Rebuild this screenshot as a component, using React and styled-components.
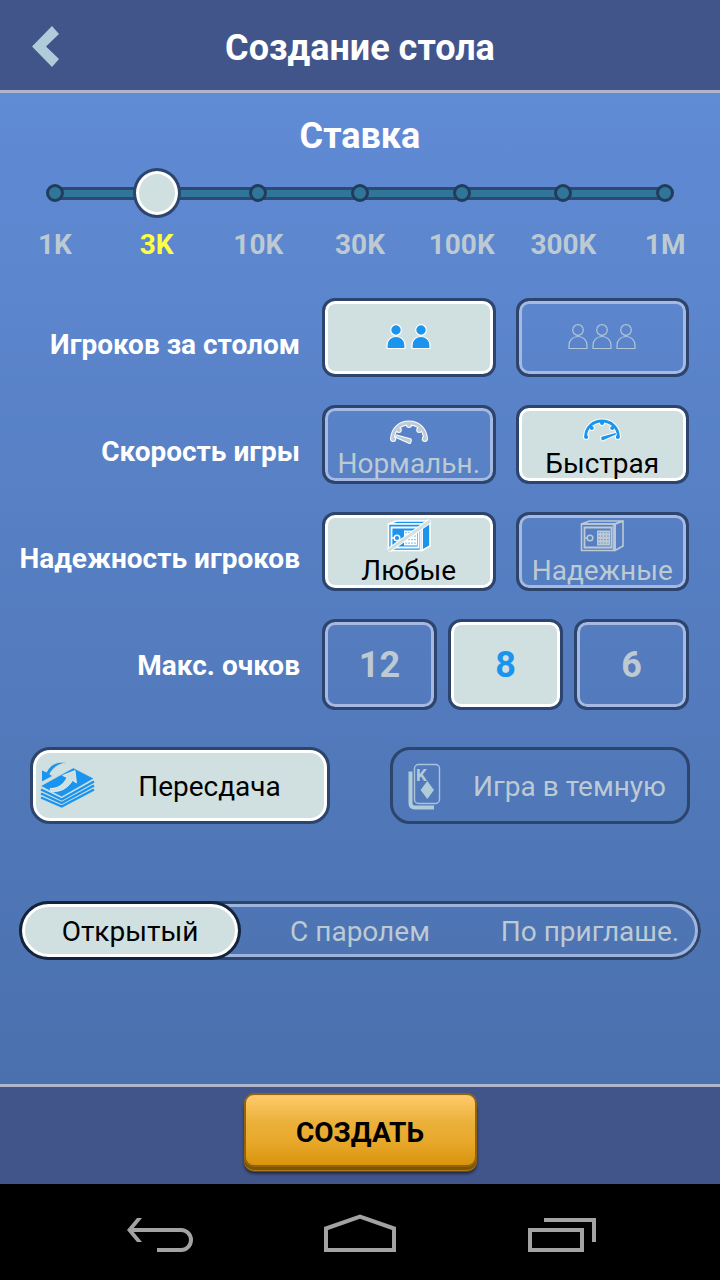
import React, { useState } from 'react'
import styled, { createGlobalStyle, css } from 'styled-components'

const COLORS = {
  bar: '#41558b',
  barLine: '#b0b6c9',
  outline: '#2d446c',
  light: '#d0e0e0',
  muted: '#bdcad3',
  blue: '#1b94ee',
}

const GlobalStyle = createGlobalStyle`
  * {
    box-sizing: border-box;
  }

  body {
    margin: 0;
    background: #000;
    font-family: Roboto, 'Noto Sans', sans-serif;
  }

  svg {
    display: block;
  }
`

const Page = styled.div`
  display: flex;
  flex-direction: column;
  min-height: 100vh;
`

const Header = styled.header`
  display: grid;
  grid-template-columns: 90px 1fr 90px;
  align-items: center;
  height: 93px;
  background: ${COLORS.bar};
  border-bottom: 3px solid ${COLORS.barLine};
`

const Title = styled.h1`
  margin: 0;
  padding-top: 6px;
  font-size: 36px;
  line-height: 42px;
  font-weight: 700;
  text-align: center;
  color: #fff;
`

const PlainButton = styled.button`
  padding: 0;
  border: 0;
  background: none;
  cursor: pointer;
`

const Main = styled.main`
  flex: 1;
  padding: 16px 0 40px;
  background: linear-gradient(to bottom, #608bd5, #4a70ad);
`

const StakeTitle = styled(Title).attrs({ as: 'h2' })``

const Slider = styled.div`
  position: relative;
  display: flex;
  align-items: center;
  height: 50px;
  margin: 11px 55px;
`

const Rail = styled.div`
  flex: 1;
  height: 13px;
  border: solid #2f486f;
  border-width: 3px 0;
  background: #30769a;
`

const Stops = styled.div`
  position: absolute;
  inset: 0 -9px;
  display: flex;
  align-items: center;
  justify-content: space-between;
`

const Stop = styled.span`
  width: 18px;
  height: 18px;
  border: 3px solid #223c5c;
  border-radius: 50%;
  background: #30769a;
`

const thumb = css`
  box-sizing: border-box;
  width: 48px;
  height: 50px;
  border: 3px solid ${COLORS.outline};
  border-radius: 50%;
  background: ${COLORS.light};
  box-shadow: inset 0 0 0 3px #fff;
`

const Range = styled.input`
  position: absolute;
  top: 0;
  left: -24px;
  width: calc(100% + 48px);
  height: 50px;
  margin: 0;
  appearance: none;
  background: none;
  cursor: pointer;

  &::-webkit-slider-thumb {
    appearance: none;
    ${thumb}
  }

  &::-moz-range-thumb {
    ${thumb}
  }
`

const StakeLabels = styled.div`
  display: grid;
  grid-template-columns: repeat(7, 1fr);
  padding: 0 4px;
`

const StakeLabel = styled.span`
  font-size: 28px;
  line-height: 32px;
  font-weight: 700;
  text-align: center;
  color: ${({ active }) => (active ? '#ffff45' : COLORS.muted)};
`

const Options = styled.div`
  display: flex;
  flex-direction: column;
  gap: 28px;
  margin-top: 37px;
`

const OptionRow = styled.div`
  display: grid;
  grid-template-columns: 300px 1fr;
  column-gap: 22px;
  align-items: center;
  padding-right: 31px;
`

const OptionLabel = styled.span`
  padding-top: ${({ lowered }) => (lowered ? 15 : 2)}px;
  font-size: 28px;
  line-height: 32px;
  font-weight: 700;
  text-align: right;
  white-space: nowrap;
  color: #fff;
`

const Choices = styled.div`
  display: grid;
  grid-template-columns: repeat(${({ count }) => count}, 1fr);
  gap: ${({ count }) => (count > 2 ? 11 : 20)}px;
`

const HiddenInput = styled.input`
  position: absolute;
  inset: 0;
  width: 100%;
  height: 100%;
  margin: 0;
  opacity: 0;
  cursor: pointer;
`

const ChoiceBox = styled.label`
  position: relative;
  display: flex;
  flex-direction: column;
  align-items: center;
  justify-content: center;
  height: ${({ tall }) => (tall ? 91 : 79)}px;
  border: 3px solid ${COLORS.outline};
  border-radius: 13px;
  background: ${({ active }) => (active ? COLORS.light : 'transparent')};
  box-shadow: inset 0 0 0 3px ${({ active }) => (active ? '#fff' : '#a5b9e2')};
`

const ChoiceText = styled.span`
  padding-top: 2px;
  font-size: 28px;
  line-height: 32px;
  white-space: nowrap;
  color: ${({ active }) => (active ? '#000' : COLORS.muted)};
`

const ChoiceNumber = styled.span`
  font-size: 36px;
  line-height: 42px;
  font-weight: 700;
  color: ${({ active }) => (active ? COLORS.blue : COLORS.muted)};
`

const People = styled.span`
  display: flex;
  gap: ${({ count }) => (count > 2 ? 4 : 5)}px;
`

const Toggles = styled.div`
  display: grid;
  grid-template-columns: 1fr 1fr;
  gap: 60px;
  margin-top: 37px;
  padding: 0 30px;
`

const ToggleBox = styled.label`
  position: relative;
  display: flex;
  align-items: center;
  height: 77px;
  padding-right: 3px;
  border: 3px solid ${COLORS.outline};
  border-radius: 20px;
  background: ${({ active }) => (active ? COLORS.light : 'transparent')};
  box-shadow: ${({ active }) => (active ? 'inset 0 0 0 3px #fff' : 'none')};
`

const ToggleText = styled(ChoiceText)`
  flex: 1;
  text-align: center;
`

const Segments = styled.div`
  display: grid;
  grid-template-columns: repeat(3, 1fr);
  gap: 8px;
  margin: 77px 19px 0;
  border-radius: 30px;
  box-shadow:
    inset 0 0 0 3px ${COLORS.outline},
    inset 0 0 0 6px #a0b5dd;
`

const Segment = styled.label`
  position: relative;
  display: flex;
  align-items: center;
  justify-content: center;
  height: 59px;
  border: 3px solid ${({ active }) => (active ? '#14233c' : 'transparent')};
  border-radius: 30px;
  ${({ active }) =>
    active &&
    css`
      background: ${COLORS.light};
      box-shadow: inset 0 0 0 3px #fff;
    `}
`

const Footer = styled.footer`
  display: flex;
  justify-content: center;
  height: 100px;
  padding-top: 6px;
  border-top: 3px solid ${COLORS.barLine};
  background: ${COLORS.bar};
`

const CreateButton = styled.button`
  width: 233px;
  height: 74px;
  padding: 6px 0 0;
  border: 2px solid #94640d;
  border-radius: 10px;
  background: linear-gradient(
    to bottom,
    #ffca6a,
    #ebb03a 40%,
    #e8a92c 65%,
    #d9940c
  );
  box-shadow:
    inset 0 1px 0 #e3c48c,
    0 3px 0 #7d5304,
    0 4px 0 #b07a16,
    0 5px 0 #6e4a08,
    0 7px 3px rgba(0, 0, 0, 0.5);
  font-family: inherit;
  font-size: 28px;
  line-height: 32px;
  font-weight: 700;
  color: #000;
  cursor: pointer;
`

const NavBar = styled.nav`
  display: flex;
  justify-content: center;
  gap: 100px;
  height: 96px;
  background: #000;
`

const BackIcon = () => (
  <svg width="90" height="90" viewBox="0 0 90 90">
    <path d="M32 46.5L52 26l7 8-13 12.5L59 59l-7 8z" fill="#b0ccda" />
  </svg>
)

const PersonIcon = ({ active }) => (
  <svg
    width="20"
    height="27"
    viewBox="0 0 20 27"
    fill={active ? COLORS.blue : 'none'}
    stroke={active ? '#fff' : '#b4c5d6'}
    strokeWidth="1.2"
  >
    <circle cx="10" cy="6" r="5.3" />
    <path d="M1 24.5V21.5C1 16 5 12.5 10 12.5S19 16 19 21.5V24.5Z" />
  </svg>
)

const GAUGE_ARC = 'M5.6 27.5C6 18 13 12 22 12S38 18 38.4 27.5'
const GAUGE_TICKS = [
  [6.2, 28],
  [11.8, 19],
  [22, 14],
  [32.2, 19],
  [37.8, 28],
]

const GaugeShape = ({ needle, grow }) => (
  <>
    <path d={GAUGE_ARC} fill="none" strokeWidth={2.8 + grow} />
    {GAUGE_TICKS.map(([x, y]) => (
      <circle key={x} cx={x} cy={y} r={2 + grow / 2} stroke="none" />
    ))}
    <path d={needle} strokeWidth={1.8 + grow} />
  </>
)

const GaugeIcon = ({ active, fast }) => {
  const needle = fast
    ? 'M22 28.5L35 25L22.500 30.500Z'
    : 'M23 29L10 25.500L22.500 31Z'
  const fill = active ? COLORS.blue : '#bccbd4'
  return (
    <svg
      width="44"
      height="36"
      viewBox={fast ? '0 1 44 36' : '0 -1 44 36'}
      strokeLinecap="round"
      strokeLinejoin="round"
    >
      <g fill="#fff" stroke="#fff">
        <GaugeShape needle={needle} grow={2} />
      </g>
      <g fill={fill} stroke={fill}>
        <GaugeShape needle={needle} grow={0} />
      </g>
    </svg>
  )
}

const KEYPAD = [14, 17.5, 21, 24.5]

const SafeIcon = ({ active, slashed }) => {
  const line = active ? '#fff' : COLORS.muted
  const fill = active ? COLORS.blue : 'none'
  return (
    <svg width="44" height="36" viewBox="0 -1 44 36">
      <g fill={fill} stroke={line} strokeWidth="1.6" strokeLinejoin="round">
        <path d="M1.5 6L9.5 3H43L35 6Z" />
        <path d="M35 6L43 3V28L35 32.500Z" />
        <path d="M1.5 6H35V32.500H1.500Z" />
      </g>
      <g fill="none" stroke={line}>
        <path d="M4.5 9.500H31.500V29.500H4.500Z" strokeWidth="1.8" />
        <path d="M33.3 7V32" strokeWidth="1.2" />
        <circle cx="10" cy="20" r="2.8" strokeWidth="1.5" />
        <path d="M5 20H7" strokeWidth="1.5" />
      </g>
      <path d="M17 12.500H30V27.500H17Z" fill={line} />
      <g fill={active ? COLORS.blue : '#5a80c4'}>
        {KEYPAD.map(y =>
          [18.5, 21.5, 24.5, 27.5].map(x => (
            <rect key={`${x}-${y}`} x={x} y={y} width="1" height="1.2" />
          ))
        )}
      </g>
      {slashed && (
        <>
          <path d="M1.5 32.500L43 3" stroke="#fff" strokeWidth="4.8" />
          <path d="M1.5 32.500L43 3" stroke={COLORS.light} strokeWidth="2.8" />
        </>
      )}
    </svg>
  )
}

const RedealIcon = () => (
  <svg width="62" height="60" viewBox="0 0 62 60">
    <g fill="none" stroke={COLORS.blue} strokeWidth="2.4">
      <path d="M8 33.500L28.700 43.500L61 25.500" />
      <path d="M8 37.500L28.700 47L61 29.500" />
      <path d="M8 41.500L28.700 50.500L61 33.500" />
    </g>
    <path
      d="M7.5 30L40.300 11.800L61 22.500L28.700 41Z"
      fill={COLORS.blue}
      stroke={COLORS.light}
      strokeWidth="0.8"
    />
    <path
      d="M35 6.800C25 4.500 17.500 8 13.500 16L8.500 13.700V26.200L20 20L16.800 18.200C20 11.500 26 7.500 35 6.800Z"
      fill={COLORS.blue}
      stroke={COLORS.light}
      strokeWidth="1"
    />
    <path
      d="M17 32.500C25 32.500 30 29 34 21.500L29.500 19.500L42 14.500L43.500 27L39.500 24.500C35 32 28 36.500 18 35.500Z"
      fill={COLORS.light}
      stroke="#fff"
      strokeWidth="0.6"
    />
  </svg>
)

const BlindIcon = () => (
  <svg width="62" height="60" viewBox="0 0 62 60">
    <path
      d="M17.500 15.500V47Q17.500 51.500 22 51.500H41"
      fill="none"
      stroke="#b0ccd9"
      strokeWidth="4"
    />
    <rect
      x="21.5"
      y="8.500"
      width="25"
      height="39"
      rx="4"
      fill="#5279b9"
      stroke="#a9c3dc"
      strokeWidth="1.4"
    />
    <text
      x="23"
      y="25"
      fontSize="17"
      fontWeight="700"
      fontFamily="Roboto, sans-serif"
      fill="#b0ccd9"
    >
      K
    </text>
    <path d="M34.300 25L41 34L34.300 43L27.600 34Z" fill="#b0ccd9" />
  </svg>
)

const NavIcon = ({ children }) => (
  <svg
    width="100"
    height="96"
    viewBox="0 0 100 96"
    fill="none"
    stroke="#a3a3a3"
    strokeWidth="4"
  >
    {children}
  </svg>
)

const STAKES = ['1K', '3K', '10K', '30K', '100K', '300K', '1M']

const OPTIONS = [
  {
    name: 'players',
    label: 'Игроков за столом',
    choices: [
      { value: '2', people: 2 },
      { value: '3', people: 3 },
    ],
  },
  {
    name: 'speed',
    label: 'Скорость игры',
    choices: [
      { value: 'normal', text: 'Нормальн.', Icon: GaugeIcon },
      { value: 'fast', text: 'Быстрая', Icon: GaugeIcon, iconProps: { fast: true } },
    ],
  },
  {
    name: 'trust',
    label: 'Надежность игроков',
    choices: [
      { value: 'any', text: 'Любые', Icon: SafeIcon, iconProps: { slashed: true } },
      { value: 'trusted', text: 'Надежные', Icon: SafeIcon },
    ],
  },
  {
    name: 'points',
    label: 'Макс. очков',
    choices: [
      { value: '12', number: 12 },
      { value: '8', number: 8 },
      { value: '6', number: 6 },
    ],
  },
]

const TOGGLES = [
  { name: 'redeal', text: 'Пересдача', Icon: RedealIcon },
  { name: 'blind', text: 'Игра в темную', Icon: BlindIcon },
]

const ACCESS = [
  { value: 'open', text: 'Открытый' },
  { value: 'password', text: 'С паролем' },
  { value: 'invite', text: 'По приглаше.' },
]

const Choice = ({ name, choice, active, onSelect }) => {
  const { value, people, number, text, Icon, iconProps } = choice
  return (
    <ChoiceBox active={active} tall={Boolean(number)}>
      <HiddenInput
        type="radio"
        name={name}
        value={value}
        checked={active}
        onChange={onSelect}
        aria-label={people ? value : undefined}
      />
      {people && (
        <People count={people}>
          {Array.from({ length: people }, (_, i) => (
            <PersonIcon key={i} active={active} />
          ))}
        </People>
      )}
      {Icon && <Icon active={active} {...iconProps} />}
      {text && <ChoiceText active={active}>{text}</ChoiceText>}
      {number && <ChoiceNumber active={active}>{number}</ChoiceNumber>}
    </ChoiceBox>
  )
}

function App() {
  const [stake, setStake] = useState(1)
  const [form, setForm] = useState({
    players: '2',
    speed: 'fast',
    trust: 'any',
    points: '8',
    redeal: true,
    blind: false,
    access: 'open',
  })
  const update = (name, value) => setForm({ ...form, [name]: value })

  return (
    <Page>
      <GlobalStyle />
      <Header>
        <PlainButton type="button" aria-label="Назад">
          <BackIcon />
        </PlainButton>
        <Title>Создание стола</Title>
      </Header>

      <Main>
        <StakeTitle id="stake-title">Ставка</StakeTitle>
        <Slider>
          <Rail />
          <Stops>
            {STAKES.map(label => (
              <Stop key={label} />
            ))}
          </Stops>
          <Range
            type="range"
            min="0"
            max={STAKES.length - 1}
            value={stake}
            onChange={e => setStake(Number(e.target.value))}
            aria-labelledby="stake-title"
          />
        </Slider>
        <StakeLabels>
          {STAKES.map((label, i) => (
            <StakeLabel key={label} active={i === stake}>
              {label}
            </StakeLabel>
          ))}
        </StakeLabels>

        <Options>
          {OPTIONS.map(({ name, label, choices }) => (
            <OptionRow key={name} role="radiogroup" aria-labelledby={name}>
              <OptionLabel id={name} lowered={choices.length === 2}>
                {label}
              </OptionLabel>
              <Choices count={choices.length}>
                {choices.map(choice => (
                  <Choice
                    key={choice.value}
                    name={name}
                    choice={choice}
                    active={form[name] === choice.value}
                    onSelect={() => update(name, choice.value)}
                  />
                ))}
              </Choices>
            </OptionRow>
          ))}
        </Options>

        <Toggles>
          {TOGGLES.map(({ name, text, Icon }) => (
            <ToggleBox key={name} active={form[name]}>
              <HiddenInput
                type="checkbox"
                name={name}
                checked={form[name]}
                onChange={e => update(name, e.target.checked)}
              />
              <Icon />
              <ToggleText active={form[name]}>{text}</ToggleText>
            </ToggleBox>
          ))}
        </Toggles>

        <Segments role="radiogroup">
          {ACCESS.map(({ value, text }) => (
            <Segment key={value} active={form.access === value}>
              <HiddenInput
                type="radio"
                name="access"
                value={value}
                checked={form.access === value}
                onChange={() => update('access', value)}
              />
              <ChoiceText active={form.access === value}>{text}</ChoiceText>
            </Segment>
          ))}
        </Segments>
      </Main>

      <Footer>
        <CreateButton type="button">СОЗДАТЬ</CreateButton>
      </Footer>

      <NavBar>
        <PlainButton type="button" aria-label="Назад">
          <NavIcon>
            <path d="M20 46H71a10 10 0 0 1 0 20H47" />
            <path
              d="M17 46L27 34H32L22 46L32 58H27Z"
              fill="#a3a3a3"
              stroke="none"
            />
          </NavIcon>
        </PlainButton>
        <PlainButton type="button" aria-label="Домой">
          <NavIcon>
            <path d="M16 66V44.500L50 32.500L84 44.500V66Z" />
          </NavIcon>
        </PlainButton>
        <PlainButton type="button" aria-label="Недавние">
          <NavIcon>
            <path d="M20 46H72V66H20Z" />
            <path d="M34 36H84V58" />
          </NavIcon>
        </PlainButton>
      </NavBar>
    </Page>
  )
}

export default App
